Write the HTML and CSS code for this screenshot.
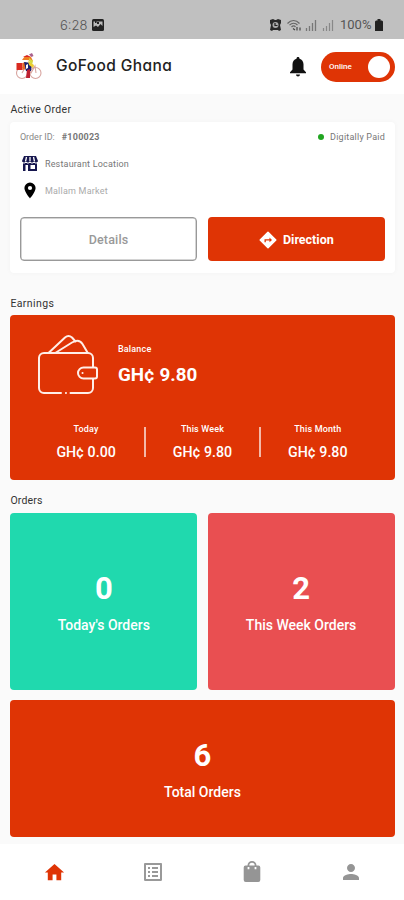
FILE: index.html
```html
<!DOCTYPE html>
<html lang="en">
<head>
<meta charset="utf-8">
<meta name="viewport" content="width=device-width, initial-scale=1">
<title>GoFood Ghana</title>
<link rel="stylesheet" href="styles.css">
</head>
<body>
<div class="status">
  <span class="clock">6:28</span>
  <svg class="photo" width="12" height="12" viewBox="0 0 12 12"><rect width="12" height="12" rx="1.500" fill="#222"/><path d="M1.500 8V2.500H3V4h1.500V2.500h6V7L8.500 5 6 8 4 6.500z" fill="#bbb"/><path d="M5 3h2v2H5z" fill="#222"/></svg>
  <div class="indicators">
    <svg width="11" height="12" viewBox="0 0 11 12"><path d="M0 1l3-1 2 1h1l2-1 3 1v3l-1 2 1 5-2 1-1-1H3l-1 1-2-1 1-5-1-2z" fill="#292929"/><circle cx="5.500" cy="6" r="3" fill="#aaa"/><path d="M5 4v2.500h2.500" fill="none" stroke="#222" stroke-width="1.200"/></svg>
    <svg class="wifi" width="15" height="13" viewBox="0 0 15 13" fill="none" stroke="#666" stroke-width="1.200"><path d="M.5 4.500C4 .5 9 .5 12.500 4.500M2.500 6.200c2.500-2.600 6-2.600 8 0M4.500 8c1.500-1.500 3-1.500 4 0"/><path d="M6 9.500l2 1.500M10 8v3.500M13 8.500v3" stroke="#444"/></svg>
    <svg width="12" height="12" viewBox="0 0 12 12" fill="none" stroke="#777" stroke-width="1.300"><path d="M1.500 9v3M4.500 7v5M7.500 4v8M10.500 1v11"/></svg>
    <svg class="signal2" width="12" height="12" viewBox="0 0 12 12" fill="none" stroke="#888" stroke-width="1.200"><path d="M1.500 9v3M4.500 7v5M7.500 4v8M10.500 1v11"/></svg>
    <span class="percent">100%</span>
    <svg width="8" height="12" viewBox="0 0 8 12"><path d="M2.500 0h3v1.500H7l1 1V12H0V2.500l1-1h1.500z" fill="#222"/></svg>
  </div>
</div>

<header class="header">
  <svg class="logo" width="28" height="28" viewBox="0 0 28 28">
    <g fill="none" stroke="#d8a5a0" stroke-width="1.100"><circle cx="7" cy="20" r="5.500"/><circle cx="20.500" cy="20" r="5.500"/><path d="M7 20l4-7 5 7 4-7 1 7M11 14h9"/></g>
    <path d="M1.500 10h6v7h-6z" fill="#d92a20"/><path d="M7.500 10l3-1v7l-3 1z" fill="#e56b25"/>
    <path d="M9 9l8 1-1 8h-5z" fill="#18206f"/><path d="M11 12l2-1v4l-2 1z" fill="#fff"/>
    <path d="M13 8l6 4-1 3-4-3z" fill="#f0cc31"/><path d="M12 17l3-1v9h-4z" fill="#bd2030"/>
    <path d="M7 7l3-4 6 1 2 4-6-1z" fill="#ef7c22"/><path d="M8 4l4-2 4 2z" fill="#d82824"/>
    <path d="M14 5l4 3-1 4-3-4z" fill="#d6d93f"/><path d="M14 1.500l3-1.500 1.500 3-2 1z" fill="#a9608d"/>
  </svg>
  <h1 class="brand">GoFood Ghana</h1>
  <svg class="bell" width="16" height="20" viewBox="0 0 16 20" fill="#111"><path d="M8 0c1 0 1.500.7 1.500 1.700C12 2.400 13.500 4.500 13.500 7.300v5.200L16 15.300v1H0v-1l2.500-2.800V7.300C2.500 4.500 4 2.400 6.500 1.700 6.500.7 7 0 8 0zM6 17.500h4a2 2 0 0 1-4 0z"/></svg>
  <div class="toggle"><span>Online</span><i></i></div>
</header>

<main class="main">
  <h2 class="label active-label">Active Order</h2>
  <section class="order">
    <div class="order-top">
      <span class="order-id">Order ID:</span><b class="order-number">#100023</b>
      <i class="dot"></i><span class="paid">Digitally Paid</span>
    </div>
    <div class="place">
      <svg width="16" height="15" viewBox="0 0 16 15"><path d="M2 0h12l2 5-1 2v8H1V7L0 5z" fill="#16164e"/><path d="M4.500 1L3.500 5.500M8 1v4.500M11.500 1l1 4.500" stroke="#fff" stroke-width="1.300"/><path d="M0 6.300q2 1.700 4 0 2 1.700 4 0 2 1.700 4 0 2 1.700 4 0" fill="none" stroke="#fff"/><path d="M3.500 9H6v6H3.500zM8.500 9H13v4H8.500z" fill="#fff"/></svg>
      <span class="restaurant">Restaurant Location</span>
    </div>
    <div class="place market-row">
      <svg width="16" height="17" viewBox="0 0 16 17"><path d="M8 .5a5.600 5.600 0 0 0-5.600 5.600C2.400 10 8 16.500 8 16.500S13.600 10 13.600 6.100A5.600 5.600 0 0 0 8 .5z"/><circle cx="8" cy="6" r="2.100" fill="#fff"/></svg>
      <span class="market">Mallam Market</span>
    </div>
    <div class="actions">
      <button class="btn outline"><span>Details</span></button>
      <button class="btn solid"><svg width="18" height="18" viewBox="0 0 18 18"><path d="M9 1.200L16.800 9 9 16.800 1.200 9z" fill="#fff" stroke="#fff" stroke-width="1.500" stroke-linejoin="round"/><path d="M5.500 11.200V8.300h5V6.500L13 9l-2.500 2.300V9.600H6.800v1.600z" fill="#df3405"/></svg><span>Direction</span></button>
    </div>
  </section>

  <h2 class="label earn-label">Earnings</h2>
  <section class="earnings">
    <div class="balance">
      <svg width="62" height="62" viewBox="0 0 62 62" fill="none" stroke="#ffeee8" stroke-width="2" stroke-linecap="round" stroke-linejoin="round">
        <path d="M24 59H7a5 5 0 0 1-5-5V24a5 5 0 0 1 5-5h44a5 5 0 0 1 5 5v9M56 45v9a5 5 0 0 1-5 5H33.500M28.900 59h.1"/>
        <path d="M58 33.500H46.500a5.500 5.500 0 0 0 0 11H58a2 2 0 0 0 2-2v-7a2 2 0 0 0-2-2zM45.500 39h.1"/>
        <path d="M12 18.500L28 3.500q3.500-3 7 0l3.500 4M19 18.500L35 8.500q7-4 10.500 1.500l5 8.500"/>
      </svg>
      <div class="balance-text"><span class="bal-title">Balance</span><strong>GH¢ 9.80</strong></div>
    </div>
    <div class="periods">
      <div class="period"><span class="today">Today</span><b>GH¢ 0.00</b></div>
      <div class="period"><span class="week">This Week</span><b>GH¢ 9.80</b></div>
      <div class="period"><span class="month">This Month</span><b>GH¢ 9.80</b></div>
    </div>
  </section>

  <h2 class="label orders-label">Orders</h2>
  <section class="tiles">
    <div class="tile green"><strong>0</strong><span>Today's Orders</span></div>
    <div class="tile coral"><strong>2</strong><span>This Week Orders</span></div>
    <div class="tile total"><strong>6</strong><span>Total Orders</span></div>
  </section>
</main>

<nav class="nav">
  <a><svg width="23" height="23" viewBox="0 0 24 24" fill="#df3405"><path d="M10 20v-6h4v6h5v-8h3L12 3 2 12h3v8z"/></svg></a>
  <a><svg width="24" height="24" viewBox="0 0 24 24" fill="#999"><path d="M19 5v14H5V5h14m1.100-2H3.900c-.5 0-.9.4-.9.900v16.200c0 .4.400.9.900.9h16.200c.4 0 .9-.5.900-.9V3.900c0-.5-.5-.9-.9-.9zM11 7h6v2h-6V7zm0 4h6v2h-6v-2zm0 4h6v2h-6zM7 7h2v2H7zm0 4h2v2H7zm0 4h2v2H7z"/></svg></a>
  <a><svg width="24" height="24" viewBox="0 0 24 24"><path d="M18.500 5.500h-2a4.500 4.500 0 0 0-9 0h-2A2 2 0 0 0 3.700 7.500V20a2 2 0 0 0 2 2h12.600a2 2 0 0 0 2-2V7.500a2 2 0 0 0-1.800-2zM12 2.800a2.700 2.700 0 0 1 2.700 2.700H9.300A2.700 2.700 0 0 1 12 2.800z" fill="#959595"/><path d="M8.500 7v2.200M15.500 7v2.200" stroke="#fff" stroke-width="1.800"/></svg></a>
  <a><svg width="24" height="24" viewBox="0 0 24 24" fill="#959595"><path d="M12 12c2.210 0 4-1.790 4-4s-1.790-4-4-4-4 1.790-4 4 1.790 4 4 4zm0 2c-2.670 0-8 1.340-8 4v2h16v-2c0-2.660-5.330-4-8-4z"/></svg></a>
</nav>
</body>
</html>
```
FILE: styles.css
```css
* { box-sizing: border-box; }
body { margin: 0; height: 900px; display: flex; flex-direction: column; background: #fafafa; font-family: Roboto, "Liberation Sans", sans-serif; overflow: hidden; }
svg { display: block; flex: none; }
span, b, strong, h1, h2 { white-space: nowrap; }
h1, h2 { margin: 0; }

.status { height: 39px; background: #c0c0c0; display: flex; align-items: center; padding: 11px 21px 0 60px; flex: none; color: #555; }
.clock { font: 300 13px/14px Inter, sans-serif; width: 32px; }
.indicators { margin-left: auto; display: flex; align-items: center; }
.wifi { margin-left: 6px; }
.indicators .wifi + svg { margin-left: 3px; }
.signal2 { margin-left: 5px; }
.percent { font-size: 13px; line-height: 14px; width: 35px; margin-left: 6px; font-weight: 400; }

.header { height: 55px; background: #fff; display: flex; align-items: center; padding: 0 9px 0 15px; flex: none; }
.brand { margin-left: 13px; font: 500 15.500px/20px Inter, sans-serif; font-feature-settings: "cv11"; letter-spacing: .4px; color: #222; padding-bottom: 1px; }
.bell { margin-left: auto; }
.toggle { width: 74px; height: 30px; border-radius: 15px; background: #df3405; margin-left: 15px; display: flex; align-items: center; justify-content: space-between; padding: 0 5px 0 8px; color: #fff; font-size: 8px; font-weight: 500; }
.toggle i { width: 22px; height: 22px; border-radius: 50%; background: #fff; }

.main { flex: 1; padding: 0 9.500px 0 10.400px; }
.label { font-size: 10.500px; line-height: 14px; font-weight: 400; color: #333; letter-spacing: .2px; }
.active-label { padding-top: 9px; height: 28px; letter-spacing: .3px; }
.order { height: 151px; background: #fff; border-radius: 4px; box-shadow: 0 0 5px rgba(0,0,0,.035); padding: 9px 9.500px 0; }
.order-top { display: flex; align-items: center; height: 12px; font-size: 9px; color: #888; }
.order-number { margin-left: 7px; font-weight: 700; color: #777; letter-spacing: .25px; }
.paid { letter-spacing: .22px; color: #777; }
.dot { width: 6px; height: 6px; border-radius: 50%; background: #21a521; margin-left: auto; margin-right: 6px; }
.place { display: flex; align-items: center; gap: 7px; height: 17px; margin: 12px 0 0 2px; font-size: 9px; color: #777; letter-spacing: .19px; }
.market-row { margin-top: 10px; color: #aaa; letter-spacing: .22px; }
.actions { display: grid; grid-template-columns: 1fr 1fr; gap: 10.500px; margin-top: 18px; }
.btn { height: 44px; border: 0; border-radius: 4px; display: flex; align-items: center; justify-content: center; gap: 6px; padding: 1px 0 0; font: 500 12.500px/16px Roboto, sans-serif; }
.outline { background: #fff; border: 1px solid #999; box-shadow: inset 0 0 0 .5px #aaa; color: #999; letter-spacing: .15px; }
.solid { background: #df3405; color: #fff; font-weight: 700; }

.earn-label { padding-top: 24px; height: 42.400px; letter-spacing: .4px; }
.earnings { height: 165px; border-radius: 4px; background: #df3405; color: #fff; padding: 18.600px 19px 0; }
.balance { display: flex; height: 62px; padding-left: 8px; }
.balance-text { display: flex; flex-direction: column; margin-left: 18.500px; }
.bal-title { font-size: 9px; line-height: 12px; font-weight: 500; margin-top: 9px; letter-spacing: .2px; }
.balance-text strong { font-size: 18.800px; line-height: 24px; font-weight: 700; margin-top: 8px; }
.periods { display: grid; grid-template-columns: repeat(3, 1fr); height: 30px; margin: 31px 1px 0 -1px; }
.period { height: 30px; display: flex; flex-direction: column; align-items: center; }
.period + .period { border-left: 2px solid rgba(255,255,255,.66); }
.period span { font-size: 9px; line-height: 12px; font-weight: 500; margin-top: -4px; letter-spacing: .15px; }
.period b { font-size: 14.200px; line-height: 18px; font-weight: 500; margin-top: 8px; }

.orders-label { padding-top: 14px; height: 33px; }
.tiles { display: grid; grid-template-columns: 1fr 1fr; grid-template-rows: 176.500px 137px; gap: 10.500px; }
.tile { border-radius: 4px; color: #fff; display: flex; flex-direction: column; align-items: center; justify-content: center; padding-top: 2px; }
.tile strong { font-size: 31px; line-height: 36px; font-weight: 700; }
.tile span { font-size: 14px; line-height: 18px; font-weight: 500; margin-top: 9px; }
.green { background: #20d9ae; }
.coral { background: #e94f51; }
.total { background: #df3405; grid-column: 1 / 3; padding-top: 1px; }

.nav { height: 56px; background: #fff; display: flex; justify-content: space-around; align-items: center; flex: none; padding: 0 4px 0 5px; }
.nav a { flex: 1; display: flex; justify-content: center; }
```
